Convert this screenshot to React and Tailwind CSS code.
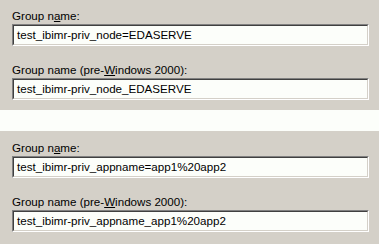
const font = { fontFamily: '"Liberation Sans", Arial, sans-serif' };

function Label({ children }) {
  return <div className="h-[13px] text-[11.6px] leading-[13px] text-black">{children}</div>;
}

function Field({ value }) {
  return (
    <div className="mt-[2px] h-[22px] border border-t-[#808080] border-l-[#808080] border-b-white border-r-white">
      <div className="flex h-full items-center border border-t-[#404040] border-l-[#404040] border-b-[#d4d0c8] border-r-[#d4d0c8] bg-[#fcfefa] pl-[3px] text-[11.6px] text-black">
        {value}
      </div>
    </div>
  );
}

function Panel({ name, legacy, extra }) {
  return (
    <div className={`bg-[#d4d0c8] pl-3 pr-[10px] pt-[9px] ${extra}`}>
      <Label>
        Group n<span className="underline">a</span>me:
      </Label>
      <Field value={name} />
      <div className="h-[17px]" />
      <Label>
        Group name (pre-<span className="underline">W</span>indows 2000):
      </Label>
      <Field value={legacy} />
    </div>
  );
}

export default function App() {
  return (
    <div className="h-[244px] w-[379px] overflow-hidden bg-[#fcfefa]" style={font}>
      <Panel
        name="test_ibimr-priv_node=EDASERVE"
        legacy="test_ibimr-priv_node_EDASERVE"
        extra="h-[110px]"
      />
      <div className="h-[21px]" />
      <Panel
        name="test_ibimr-priv_appname=app1%20app2"
        legacy="test_ibimr-priv_appname_app1%20app2"
        extra="h-[113px] pt-[10px]"
      />
    </div>
  );
}
